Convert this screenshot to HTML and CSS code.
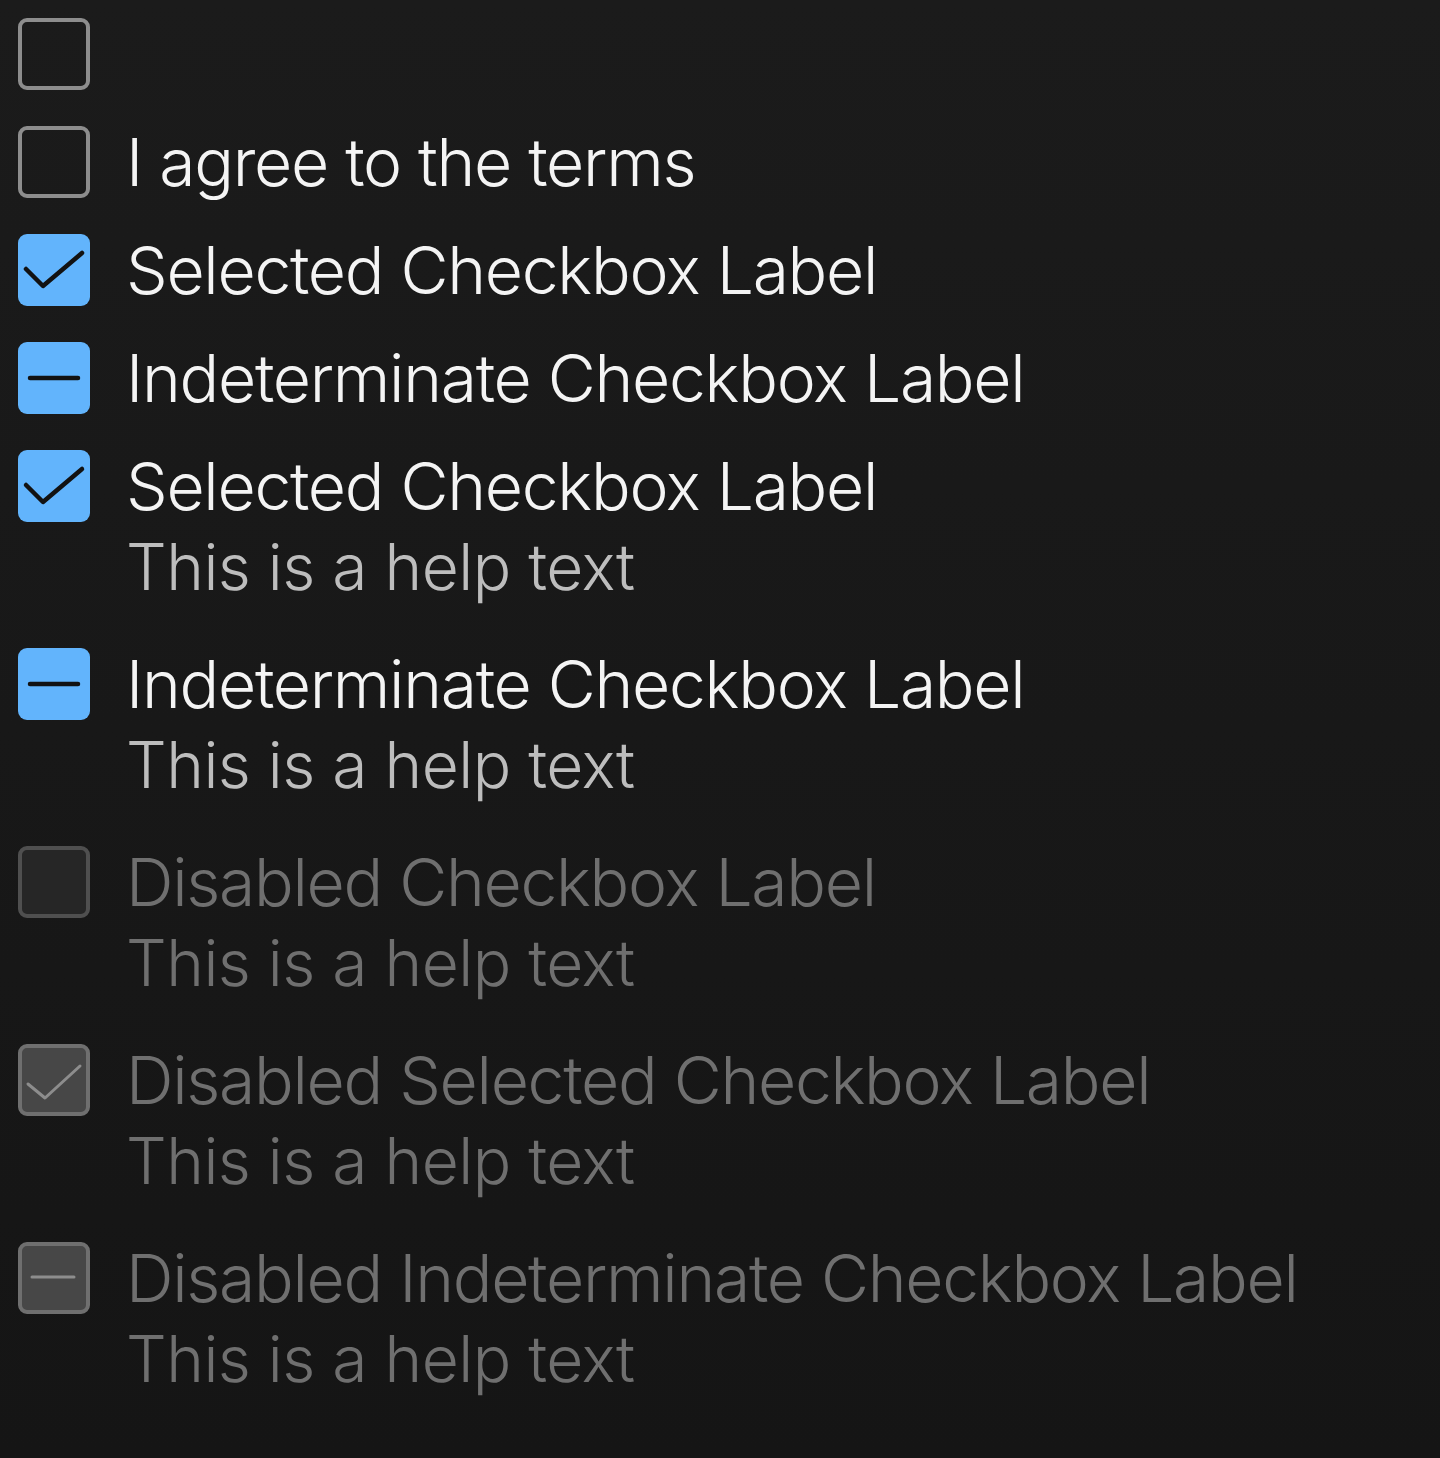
FILE: index.html
```html
<!DOCTYPE html>
<html lang="en">
<head>
<meta charset="utf-8">
<title>Checkboxes</title>
<link rel="stylesheet" href="styles.css">
</head>
<body>
<div class="list">
  <div class="row">
    <span class="box"></span>
  </div>
  <div class="row">
    <span class="box"></span>
    <div class="text"><div class="label">I agree to the terms</div></div>
  </div>
  <div class="row">
    <span class="box checked">
      <svg viewBox="0 0 72 72" class="mark"><polyline points="8,35 25,52 64,19" /></svg>
    </span>
    <div class="text"><div class="label">Selected Checkbox Label</div></div>
  </div>
  <div class="row">
    <span class="box checked">
      <svg viewBox="0 0 72 72" class="mark"><line x1="12" y1="36" x2="60" y2="36" /></svg>
    </span>
    <div class="text"><div class="label">Indeterminate Checkbox Label</div></div>
  </div>
  <div class="row">
    <span class="box checked">
      <svg viewBox="0 0 72 72" class="mark"><polyline points="8,35 25,52 64,19" /></svg>
    </span>
    <div class="text"><div class="label">Selected Checkbox Label</div><div class="help">This is a help text</div></div>
  </div>
  <div class="row">
    <span class="box checked">
      <svg viewBox="0 0 72 72" class="mark"><line x1="12" y1="36" x2="60" y2="36" /></svg>
    </span>
    <div class="text"><div class="label">Indeterminate Checkbox Label</div><div class="help">This is a help text</div></div>
  </div>
  <div class="row disabled">
    <span class="box"></span>
    <div class="text"><div class="label">Disabled Checkbox Label</div><div class="help">This is a help text</div></div>
  </div>
  <div class="row disabled">
    <span class="box checked">
      <svg viewBox="0 0 72 72" class="mark"><polyline points="10,40 27,54 62,22" /></svg>
    </span>
    <div class="text"><div class="label">Disabled Selected Checkbox Label</div><div class="help">This is a help text</div></div>
  </div>
  <div class="row disabled">
    <span class="box checked">
      <svg viewBox="0 0 72 72" class="mark"><line x1="14" y1="35" x2="56" y2="35" /></svg>
    </span>
    <div class="text"><div class="label">Disabled Indeterminate Checkbox Label</div><div class="help">This is a help text</div></div>
  </div>
</div>
</body>
</html>
```
FILE: styles.css
```css
html, body {
  margin: 0;
  padding: 0;
}
body {
  background: linear-gradient(#1b1b1b, #151515);
  min-height: 1458px;
  font-family: Inter, "Noto Sans", sans-serif;
  color: #f4f4f4;
}
.list {
  display: flex;
  flex-direction: column;
  padding-left: 18px;
}
.row {
  display: flex;
  align-items: flex-start;
  gap: 36px;
  min-height: 108px;
}
.box {
  flex: none;
  box-sizing: border-box;
  width: 72px;
  height: 72px;
  margin-top: 18px;
  border: 4px solid #8d8d8d;
  border-radius: 9px;
  position: relative;
}
.box.checked {
  border: none;
  background: #62b4fc;
}
.mark {
  position: absolute;
  left: 0;
  top: 0;
  width: 72px;
  height: 72px;
  fill: none;
  stroke: #121212;
  stroke-width: 4.5;
  stroke-linecap: round;
  stroke-linejoin: round;
}
.text {
  display: flex;
  flex-direction: column;
}
.label {
  font-size: 66px;
  font-weight: 300;
  letter-spacing: -1.3px;
  line-height: 108px;
  white-space: nowrap;
}
.help {
  font-size: 64px;
  font-weight: 300;
  letter-spacing: -0.5px;
  line-height: 54px;
  color: #bdbdbd;
  padding-bottom: 36px;
  white-space: nowrap;
}
.disabled .label,
.disabled .help {
  color: #6f6f6f;
}
.disabled .box {
  border-color: #4f4f4f;
  background: #262626;
}
.disabled .box.checked {
  border: 4px solid #6f6f6f;
  background: #474747;
}
.disabled .mark {
  stroke: #8d8d8d;
  stroke-width: 3;
  left: -4px;
  top: -4px;
}
```
